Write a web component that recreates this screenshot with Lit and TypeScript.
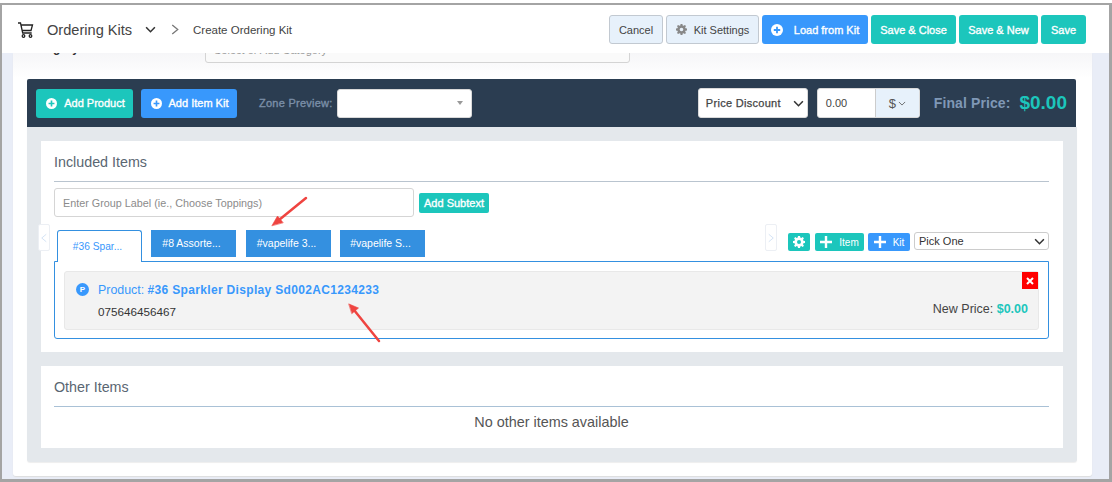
import { LitElement, html, css, svg } from "lit";
import { customElement } from "lit/decorators.js";

const plusCircle = html`<svg class="ic" viewBox="0 0 12 12" width="12" height="12"><circle cx="6" cy="6" r="6" fill="#fff"/><path d="M6 2.800v6.400M2.800 6h6.400" stroke="currentColor" stroke-width="1.800"/></svg>`;
const gearPath = svg`<path fill-rule="evenodd" d="M5 0h2l.3 1.600 1 .4L9.700 1.100l1.200 1.200L10 3.700l.4 1L12 5v2l-1.600.3-.4 1 .9 1.400-1.200 1.200L8.300 10l-1 .4L7 12H5l-.3-1.600-1-.4-1.400.9-1.200-1.200L2 8.300l-.4-1L0 7V5l1.600-.3.4-1-.9-1.400 1.200-1.200L3.700 2l1-.4zM6 4a2 2 0 1 0 0 4 2 2 0 0 0 0-4z"/>`;
const chevDown = html`<svg viewBox="0 0 12 8" width="11" height="7" fill="none" stroke="currentColor" stroke-width="1.800"><path d="M1 1.500l5 5 5-5"/></svg>`;
const plus = html`<svg viewBox="0 0 10 10" width="12" height="12"><path d="M4 0h2v4h4v2H6v4H4V6H0V4h4z"/></svg>`;

@customElement("app-root")
export class AppRoot extends LitElement {
  static styles = css`
    :host { display: block; width: 1112px; height: 482px; overflow: hidden; background: #fff;
      font-family: "Liberation Sans", Arial, sans-serif; color: #3f4a56; position: relative; }
    * { box-sizing: border-box; }
    .frame { width: 1112px; height: 479px; margin-top: 3px; border: solid #a4a4a4; border-width: 2px 3px 3px 2px;
      background: #e9edf7; display: flex; flex-direction: column; overflow: hidden; }
    header { height: 48px; flex: none; background: #fff; display: flex; align-items: center; padding: 1px 23px 0 15px; }
    .cart { color: #222; margin-right: 12px; flex: none; }
    .title { font-size: 14.600px; color: #444; width: 98px; white-space: nowrap; }
    .chev { color: #333; display: flex; width: 26px; }
    .gt { color: #777; display: flex; width: 22px; }
    .crumb { font-size: 11.500px; color: #444; white-space: nowrap; }
    .spacer { flex: 1; }
    .hbtns { display: flex; gap: 3px; }
    .btn { height: 29px; border-radius: 3px; font-size: 11px; color: #fff; display: flex; align-items: center;
      justify-content: center; white-space: nowrap; -webkit-text-stroke: .35px currentColor; }
    .ghost { background: #e7f1fb; border: 1px solid #c2c9d1; color: #444; -webkit-text-stroke: 0; }
    .teal { background: #1cc6bc; }
    .teal .ic { color: #1cc6bc; }
    .blue { background: #3898fc; }
    .blue .ic { color: #3898fc; }
    .ic { -webkit-text-stroke: 0; flex: none; }
    .cancel { width: 54px; }
    .kit { width: 93px; gap: 7px; }
    .kit svg { fill: #888; }
    .load { width: 106px; gap: 11px; }
    .sc { width: 85px; }
    .sn { width: 79px; }
    .sv { width: 45px; }
    .page { flex: 1; margin: 0 17px 3px 11px; border-radius: 0 0 3px 3px; padding: 0 15px 14px 14px; display: flex; flex-direction: column;
      background: linear-gradient(#f6f6f8, #fff 25px); box-shadow: 0 1px 1px #ddd; }
    .clipped { height: 11px; flex: none; overflow: hidden; display: flex; align-items: flex-end; margin-bottom: 15px; }
    .lab { width: 178px; flex: none; align-self: flex-start; margin-top: -12px; font-size: 12px; color: #333; font-weight: 700; line-height: 14px; height: 14px; white-space: nowrap; }
    .fake { width: 425px; height: 29px; flex: none; margin-bottom: 1px; border: 1px solid #d4d4d4; border-radius: 3px; background: #fafafa; font-size: 11px; color: #999; padding: 2px 0 0 8px; display: flex; align-items: center; }
    .bar { height: 48px; flex: none; background: #2b3d51; border-radius: 2px 2px 0 0; display: flex; align-items: center; padding: 0 9px; margin-right: 1px; }
    .ap { width: 97px; gap: 7px; margin-right: 8px; padding-left: 2px; }
    .ak { width: 96px; gap: 7px; margin-right: 22px; padding-left: 1px; }
    .ap .ic, .ak .ic { width: 11px; height: 11px; }
    .zone { font-size: 11px; letter-spacing: .25px; width: 78px; color: #7b8fa8; white-space: nowrap; -webkit-text-stroke: .35px currentColor; }
    .zsel { width: 135px; height: 29px; background: #fff; border-radius: 3px; border: 1px solid #d9d9d9; display: flex; align-items: center; justify-content: flex-end; padding-right: 8px; }
    .tri { width: 0; height: 0; border: 3px solid transparent; border-top: 4px solid #999; border-bottom: 0; }
    .pd { width: 110px; height: 30px; background: #fff; border-radius: 3px; border: 1px solid #d9d9d9; font-size: 11px; letter-spacing: .3px; color: #444; display: flex; align-items: center; justify-content: space-between; padding: 0 3px 0 7px; margin-right: 9px; -webkit-text-stroke: .25px currentColor; }
    .pd svg { color: #333; }
    .amt { width: 103px; height: 30px; border-radius: 3px; background: #fff; border: 1px solid #d9d9d9; display: flex; align-items: stretch; font-size: 11px; color: #444; margin-right: 14px; overflow: hidden; }
    .amt .v { width: 58px; display: flex; align-items: center; padding-left: 8px; border-right: 1px solid #ccc; }
    .amt .c { flex: 1; background: #e7f1fb; display: flex; align-items: center; justify-content: center; gap: 2px; font-size: 13px; color: #555; }
    .fp { font-size: 14px; font-weight: 700; letter-spacing: .1px; color: #7f98b6; margin-right: 9px; white-space: nowrap; }
    .fv { font-size: 19px; font-weight: 700; color: #1cc6bc; }
    .section { flex: 1; background: #e4e8ec; padding: 14px; display: flex; flex-direction: column; gap: 14px; border-radius: 0 0 3px 3px; box-shadow: 0 1px 1px #eee; }
    .card { background: #fff; padding: 0 14px 0 13px; }
    .c1 { height: 211px; flex: none; }
    .c2 { height: 82px; flex: none; }
    .ch { height: 41px; font-size: 14.300px; color: #5a6672; display: flex; align-items: center; border-bottom: 1px solid #a9c1d6; padding-top: 1px; }
    .c1 .ch { border-bottom-color: #b9c4cf; }
    .grp { display: flex; align-items: center; gap: 5px; margin-top: 6px; }
    .inp { width: 360px; height: 29px; border: 1px solid #d5d5d5; border-radius: 3px; font-size: 10.800px; color: #8b8b8b; padding-left: 8px; display: flex; align-items: center; }
    .sub { width: 70px; height: 20px; background: #1cc6bc; color: #fff; font-size: 11px; border-radius: 2px; display: flex; align-items: center; justify-content: center; -webkit-text-stroke: .35px currentColor; }
    .tabs { display: flex; align-items: flex-start; margin-top: 13px; height: 31px; position: relative; z-index: 1; }
    .nav { width: 12px; height: 27px; flex: none; border: 1px solid #eceff4; border-radius: 2px; color: #cfe0f4; display: flex; align-items: center; justify-content: center; background: #fff; }
    .navl { margin: -6px 0 0 -16px; }
    .tab { width: 85px; height: 27px; flex: none; background: #3490e0; color: #fff; font-size: 10.500px; display: flex; align-items: center; justify-content: center; padding: 0 4px 2px 0; margin-right: 10px; }
    .tab.g9 { margin-right: 9px; }
    .tab.on { background: #fff; color: #3898fc; font-size: 10.200px; height: 32px; border: 1px solid #3490e0; border-bottom: none; border-radius: 3px 3px 0 0; margin: 0 9px 0 7px; padding: 0 4px 0 0; }
    .tools { display: flex; gap: 4px; align-items: flex-start; margin: -6px 0 0 auto; height: 27px; }
    .navr { margin-right: 7px; }
    .tb { height: 18px; margin-top: 9px; border-radius: 2px; display: flex; align-items: center; color: #fff; font-size: 10px; justify-content: center; gap: 7px; }
    .tb svg { fill: #fff; }
    .tg { width: 22px; background: #1cc6bc; margin-right: 1px; }
    .ti { width: 49px; background: #1cc6bc; }
    .tk { width: 42px; background: #3898fc; }
    .pick { width: 135px; height: 18px; margin-top: 8px; border: 1px solid #ccc; border-radius: 3px; font-size: 11px; color: #333; display: flex; align-items: center; justify-content: space-between; padding: 0 3px 0 4px; }
    .pick svg { color: #333; }
    .panel { height: 78px; border: 1px solid #3490e0; border-radius: 0 0 3px 3px; padding: 9px; }
    .prod { height: 59px; background: #f3f3f3; border: 1px solid #e8e8e8; border-radius: 3px; display: flex; padding: 0 10px 0 11px; position: relative; }
    .dot { width: 13px; height: 13px; background: #3898fc; border-radius: 50%; color: #fff; font-size: 8px; font-weight: 700; display: flex; align-items: center; justify-content: center; margin: 11px 9px 0 0; flex: none; }
    .pinfo { flex: 1; }
    .pname { font-size: 12.400px; color: #3898fc; margin-top: 11px; line-height: 15px; white-space: nowrap; }
    .pname b { font-size: 12px; letter-spacing: .33px; }
    .code { font-size: 11.700px; color: #333; margin-top: 7px; }
    .np { align-self: flex-end; font-size: 12.500px; color: #444; padding-bottom: 13px; }
    .np b { color: #1cc6bc; font-weight: 700; }
    .x { position: absolute; right: 0; top: 0; width: 16px; height: 17px; background: #f00; display: flex; align-items: center; justify-content: center; }
    .none { text-align: center; font-size: 14.400px; color: #555; margin-top: 7px; }
    .arrow { position: absolute; left: 0; top: 0; pointer-events: none; }
  `;

  render() {
    return html`
      <div class="frame">
        <header>
          <svg class="cart" width="18" height="18" viewBox="0 0 18 18" fill="none" stroke="currentColor" stroke-width="1.300"><path d="M1 2h2.500l2.200 10h9M4 4h11.500l-1.500 5.500H5"/><circle cx="6.500" cy="15" r="1.300"/><circle cx="13.500" cy="15" r="1.300"/></svg>
          <div class="title">Ordering Kits</div>
          <div class="chev">${chevDown}</div>
          <div class="gt"><svg viewBox="0 0 8 12" width="8" height="11" fill="none" stroke="currentColor" stroke-width="1.400"><path d="M1 1l6 5-6 5"/></svg></div>
          <div class="crumb">Create Ordering Kit</div>
          <div class="spacer"></div>
          <div class="hbtns">
            <div class="btn ghost cancel">Cancel</div>
            <div class="btn ghost kit"><svg viewBox="0 0 12 12" width="11" height="11">${gearPath}</svg>Kit Settings</div>
            <div class="btn blue load">${plusCircle}Load from Kit</div>
            <div class="btn teal sc">Save &amp; Close</div>
            <div class="btn teal sn">Save &amp; New</div>
            <div class="btn teal sv">Save</div>
          </div>
        </header>
        <div class="page">
          <div class="clipped"><div class="lab">Category</div><div class="fake">Select or Add Category</div></div>
          <div class="bar">
            <div class="btn teal ap">${plusCircle}Add Product</div>
            <div class="btn blue ak">${plusCircle}Add Item Kit</div>
            <div class="zone">Zone Preview:</div>
            <div class="zsel"><div class="tri"></div></div>
            <div class="spacer"></div>
            <div class="pd">Price Discount ${chevDown}</div>
            <div class="amt"><div class="v">0.00</div><div class="c">$<svg viewBox="0 0 12 8" width="8" height="5" fill="none" stroke="currentColor" stroke-width="1.300"><path d="M1 1.500l5 5 5-5"/></svg></div></div>
            <div class="fp">Final Price:</div>
            <div class="fv">$0.00</div>
          </div>
          <div class="section">
            <div class="card c1">
              <div class="ch">Included Items</div>
              <div class="grp"><div class="inp">Enter Group Label (ie., Choose Toppings)</div><div class="sub">Add Subtext</div></div>
              <div class="tabs">
                <div class="nav navl"><svg viewBox="0 0 8 12" width="6" height="10" fill="none" stroke="currentColor" stroke-width="1.200"><path d="M7 1L1 6l6 5"/></svg></div>
                <div class="tab on">#36 Spar...</div>
                <div class="tab">#8 Assorte...</div>
                <div class="tab g9">#vapelife 3...</div>
                <div class="tab">#vapelife S...</div>
                <div class="tools">
                  <div class="nav navr"><svg viewBox="0 0 8 12" width="6" height="10" fill="none" stroke="currentColor" stroke-width="1.200"><path d="M1 1l6 5-6 5"/></svg></div>
                  <div class="tb tg"><svg viewBox="0 0 12 12" width="12" height="12">${gearPath}</svg></div>
                  <div class="tb ti">${plus}Item</div>
                  <div class="tb tk">${plus}Kit</div>
                  <div class="pick">Pick One ${chevDown}</div>
                </div>
              </div>
              <div class="panel">
                <div class="prod">
                  <div class="dot">P</div>
                  <div class="pinfo">
                    <div class="pname">Product: <b>#36 Sparkler Display Sd002AC1234233</b></div>
                    <div class="code">075646456467</div>
                  </div>
                  <div class="np">New Price: <b>$0.00</b></div>
                  <div class="x"><svg viewBox="0 0 8 8" width="8" height="8" fill="none" stroke="#fff" stroke-width="2"><path d="M1 1l6 6M7 1L1 7"/></svg></div>
                </div>
              </div>
            </div>
            <div class="card c2">
              <div class="ch">Other Items</div>
              <div class="none">No other items available</div>
            </div>
          </div>
        </div>
      </div>
      <svg class="arrow" width="1112" height="482">
        <g fill="#ef4440" stroke="#ef4440" stroke-width="2.500" stroke-linecap="round">
          <path d="M306 198L279 220" fill="none"/>
          <path d="M272 225.500l5.500-9.500 5.500 6.500z" stroke-width=".6"/>
          <path d="M379 341L354 310" fill="none"/>
          <path d="M349 304l9.500 4-6.500 5.500z" stroke-width=".6"/>
        </g>
      </svg>
    `;
  }
}
